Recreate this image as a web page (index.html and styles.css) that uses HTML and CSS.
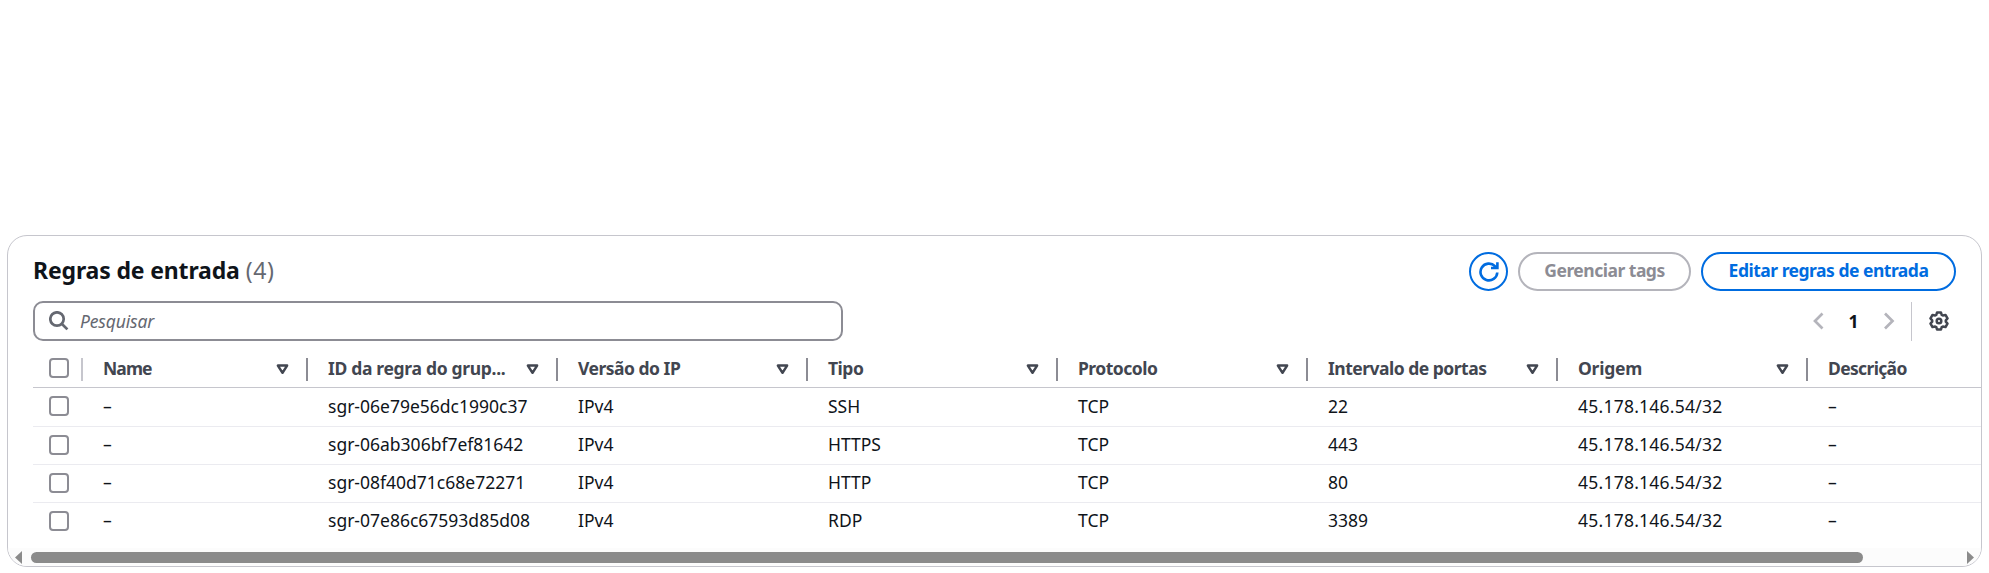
FILE: index.html
```html
<!DOCTYPE html>
<html lang="pt-BR">
<head>
<meta charset="utf-8">
<title>Regras de entrada</title>
<link rel="stylesheet" href="styles.css">
</head>
<body>
<svg class="defs" aria-hidden="true">
  <symbol id="sort" viewBox="0 0 13 11"><path d="M1.900 1.600h9.200L6.500 8.800z"/></symbol>
</svg>
<section class="card">
  <header class="header">
    <h2 class="title"><span class="title-text">Regras de entrada</span> <span class="counter">(4)</span></h2>
    <div class="actions">
      <button class="btn btn-icon" aria-label="Atualizar"><svg width="20" height="20" viewBox="0 0 20 20"><path d="M18.300 10.500A8.400 8.400 0 1 1 16 4.200L18 6M18.400 0.300V6H12"/></svg></button>
      <button class="btn btn-disabled"><span>Gerenciar tags</span></button>
      <button class="btn btn-edit"><span>Editar regras de entrada</span></button>
    </div>
  </header>
  <div class="tools">
    <div class="search">
      <svg width="20" height="20" viewBox="0 0 20 20"><circle cx="8" cy="8" r="6.700"/><path d="M12.700 12.700L18.400 18.400"/></svg>
      <span>Pesquisar</span>
    </div>
    <div class="pager">
      <svg class="chev" width="12" height="18" viewBox="0 0 12 18"><path d="M10.500 1.500L3 9l7.500 7.500"/></svg>
      <span class="page">1</span>
      <svg class="chev" width="12" height="18" viewBox="0 0 12 18"><path d="M2 1.500L9.500 9 2 16.500"/></svg>
      <span class="divider"></span>
      <svg class="gear" width="20" height="20" viewBox="0 0 20 20"><path d="M8 1.500h4l.7 2.300 1.200.7 2.600-.6 2 3.500-1.700 1.900v1.400l1.700 1.900-2 3.500-2.600-.6-1.200.7-.7 2.300H8l-.7-2.300-1.200-.7-2.600.6-2-3.500 1.700-1.900V9.300L1.500 7.400l2-3.500 2.600.6 1.200-.7z"/><circle cx="10" cy="10" r="2.300"/></svg>
    </div>
  </div>
  <div class="table">
    <div class="row head">
      <div class="cell sel"><i class="check"></i></div>
      <div class="cell name"><span>Name</span><svg class="sort"><use href="#sort"/></svg></div>
      <div class="cell group"><span>ID da regra do grup...</span><svg class="sort"><use href="#sort"/></svg></div>
      <div class="cell"><span>Versão do IP</span><svg class="sort"><use href="#sort"/></svg></div>
      <div class="cell"><span>Tipo</span><svg class="sort"><use href="#sort"/></svg></div>
      <div class="cell"><span>Protocolo</span><svg class="sort"><use href="#sort"/></svg></div>
      <div class="cell"><span>Intervalo de portas</span><svg class="sort"><use href="#sort"/></svg></div>
      <div class="cell origin"><span>Origem</span><svg class="sort"><use href="#sort"/></svg></div>
      <div class="cell last"><span>Descrição</span></div>
    </div>
    <div class="row first"><div class="cell sel"><i class="check"></i></div><div class="cell">–</div><div class="cell">sgr-06e79e56dc1990c37</div><div class="cell">IPv4</div><div class="cell">SSH</div><div class="cell">TCP</div><div class="cell">22</div><div class="cell ip">45.178.146.54/32</div><div class="cell">–</div></div>
    <div class="row"><div class="cell sel"><i class="check"></i></div><div class="cell">–</div><div class="cell">sgr-06ab306bf7ef81642</div><div class="cell">IPv4</div><div class="cell">HTTPS</div><div class="cell">TCP</div><div class="cell">443</div><div class="cell ip">45.178.146.54/32</div><div class="cell">–</div></div>
    <div class="row"><div class="cell sel"><i class="check"></i></div><div class="cell">–</div><div class="cell">sgr-08f40d71c68e72271</div><div class="cell">IPv4</div><div class="cell">HTTP</div><div class="cell">TCP</div><div class="cell">80</div><div class="cell ip">45.178.146.54/32</div><div class="cell">–</div></div>
    <div class="row"><div class="cell sel"><i class="check"></i></div><div class="cell">–</div><div class="cell">sgr-07e86c67593d85d08</div><div class="cell">IPv4</div><div class="cell">RDP</div><div class="cell">TCP</div><div class="cell">3389</div><div class="cell ip">45.178.146.54/32</div><div class="cell">–</div></div>
  </div>
  <div class="scrollbar">
    <svg width="7" height="13" viewBox="0 0 7 13"><path d="M7 0v13L0 6.500z"/></svg>
    <div class="track"><div class="thumb"></div></div>
    <svg width="7" height="13" viewBox="0 0 7 13"><path d="M0 0v13l7-6.500z"/></svg>
  </div>
</section>
</body>
</html>
```
FILE: styles.css
```css
* { box-sizing: border-box; }
body {
  margin: 0;
  padding: 235px 7px 0;
  background: #fff;
  color: #0f141a;
  font: 17.5px/25px "Noto Sans", "Open Sans", sans-serif;
  overflow: hidden;
}
.defs { display: none; }
.card {
  width: 1975px;
  height: 332px;
  border: 1px solid #c6c6cd;
  border-radius: 20px;
  overflow: hidden;
  display: flex;
  flex-direction: column;
}
.header {
  display: flex;
  justify-content: space-between;
  padding: 16px 25px 0 25px;
  height: 65px;
}
.title {
  margin: 3px 0 0;
  font-size: 23px;
  line-height: 31px;
  font-weight: 700;
  white-space: nowrap;
}
.title-text { letter-spacing: -0.15px; }
.counter { font-weight: 400; color: #656871; letter-spacing: 0.6px; }
.actions { display: flex; gap: 10px; }
.btn {
  height: 39px;
  width: 173px;
  padding: 0;
  border: 2px solid #006ce0;
  border-radius: 20px;
  background: #fff;
  color: #006ce0;
  font: 700 17.5px/25px "Noto Sans", "Open Sans", sans-serif;
  letter-spacing: -0.5px;
  white-space: nowrap;
  display: flex;
  align-items: center;
  justify-content: center;
}
.btn span { margin-bottom: 2px; }
.btn-icon { width: 39px; }
.btn-edit { width: 255px; }
.btn-disabled { border-color: #b4b4bb; color: #8c8c94; }
.btn svg { fill: none; stroke: #006ce0; stroke-width: 2.600; }
.tools {
  display: flex;
  justify-content: space-between;
  padding: 0 32px 0 25px;
  height: 40px;
}
.search {
  width: 810px;
  height: 40px;
  border: 2px solid #8c8c94;
  border-radius: 10px;
  display: flex;
  align-items: center;
  gap: 11px;
  padding-left: 14px;
  color: #656871;
  font-style: italic;
  letter-spacing: -0.15px;
}
.search svg { fill: none; stroke: #656871; stroke-width: 2.700; }
.pager { display: flex; align-items: center; }
.chev { fill: none; stroke: #b4b4bb; stroke-width: 2.700; }
.page { width: 59px; text-align: center; font-weight: 700; }
.divider { width: 1px; height: 39px; margin: 0 17px 0 16px; background: #c6c6cd; }
.gear { fill: none; stroke: #424650; stroke-width: 2.500; stroke-linejoin: round; }
.table { padding-left: 25px; margin-top: 11px; }
.row {
  display: grid;
  grid-template-columns: 50px 225px repeat(6, 250px) 173px;
  height: 38px;
  border-bottom: 1px solid #ebebf0;
}
.row.first { height: 39px; }
.row:last-child { border-bottom-color: transparent; }
.row.head {
  height: 36px;
  border-bottom-color: #c6c6cd;
  color: #424650;
  font-weight: 700;
  letter-spacing: -0.5px;
}
.cell {
  display: flex;
  align-items: center;
  padding: 0 0 2px 20px;
  white-space: nowrap;
}
.head .cell {
  justify-content: space-between;
  height: 23px;
  margin-top: 6px;
  padding-bottom: 0;
  padding-right: 17px;
  border-right: 2px solid #8c8c94;
}
.head .cell span { margin-bottom: 2px; }
.head .name { letter-spacing: -0.9px; }
.head .group { letter-spacing: -0.32px; }
.head .origin { letter-spacing: -0.25px; }
.ip { letter-spacing: 0.24px; }
.cell.sel { padding-left: 16px; }
.head .cell.sel { border-right-color: #c6c6cd; padding-right: 0; }
.head .last { border-right: 0; letter-spacing: -0.65px; }
.check {
  width: 20px;
  height: 20px;
  border: 2px solid #8c8c94;
  border-radius: 4px;
}
.head .check { margin-bottom: 3px; }
.sort { width: 13px; height: 11px; fill: none; stroke: #424650; stroke-width: 2.500; stroke-linejoin: round; }
.scrollbar {
  height: 18px;
  margin-top: auto;
  padding: 1px 7px 0;
  background: #fcfcfc;
  display: flex;
  align-items: center;
}
.scrollbar svg { fill: #8b8b8b; }
.track { flex: 1; padding: 0 9px; }
.thumb { width: 1832px; height: 11px; border-radius: 6px; background: #8b8b8b; }
```
